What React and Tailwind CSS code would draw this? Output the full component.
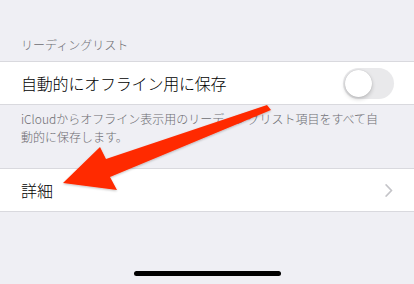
import React from "react";

export default function App() {
  const font = { fontFamily: '"Noto Sans CJK JP", "Noto Sans", sans-serif' };
  return (
    <div className="relative w-[414px] h-[284px] bg-[#efeff4] flex flex-col overflow-hidden" style={font}>
      <div className="pt-[36px] pb-[8px] px-[21px] text-[12px] leading-[17px] font-light text-[#6d6d72]">
        リーディングリスト
      </div>
      <div className="h-[44px] bg-white border-y border-[#d9d9de] flex items-center justify-between pl-[21px] pr-[20px]">
        <span className="text-[16px] font-light text-black tracking-[-0.2px]">自動的にオフライン用に保存</span>
        <div className="w-[51px] h-[31px] rounded-full bg-[#e9e9eb] p-[2px] flex items-center">
          <div className="w-[27px] h-[27px] rounded-full bg-white shadow-[0_2px_4px_rgba(0,0,0,0.2),0_0_1px_rgba(0,0,0,0.2)]" />
        </div>
      </div>
      <div className="pt-[5px] pb-[22px] px-[21px] pr-[24px] text-[12px] leading-[18px] font-light text-[#6d6d72]">
        iCloudからオフライン表示用のリーディングリスト項目をすべて自動的に保存します。
      </div>
      <div className="h-[44px] bg-white border-y border-[#d9d9de] flex items-center justify-between pl-[21px] pr-[21px]">
        <span className="text-[16px] font-light text-black">詳細</span>
        <svg width="8" height="13" viewBox="0 0 8 13" fill="none">
          <path d="M1.2 1 L6.5 6.5 L1.2 12" stroke="#c4c4c8" strokeWidth="1.8" strokeLinecap="round" strokeLinejoin="round" />
        </svg>
      </div>
      <div className="mt-auto mb-[8px] flex justify-center">
        <div className="w-[147px] h-[5px] rounded-full bg-black" />
      </div>
      <svg className="absolute inset-0 pointer-events-none" width="414" height="284" viewBox="0 0 414 284">
        <defs>
          <filter id="sh" x="-20%" y="-20%" width="140%" height="140%">
            <feDropShadow dx="0" dy="1" stdDeviation="1" floodColor="#000" floodOpacity="0.25" />
          </filter>
        </defs>
        <polygon
          points="267,105 271,110 110,177 117,190 63,183 100,147 106,159"
          fill="#ff2a00"
          filter="url(#sh)"
        />
      </svg>
    </div>
  );
}
